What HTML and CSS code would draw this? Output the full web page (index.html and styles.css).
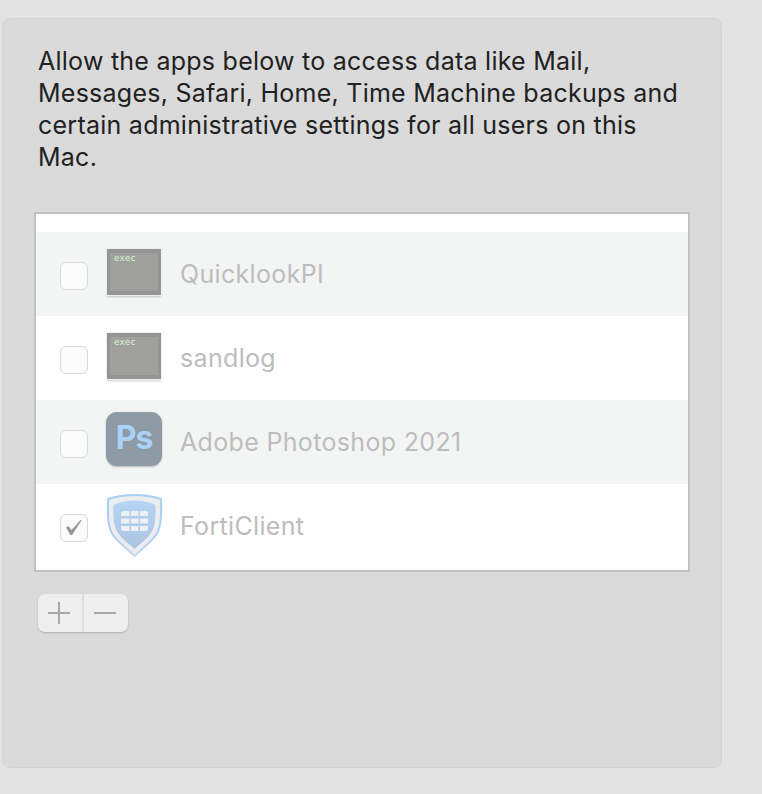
FILE: index.html
```html
<!DOCTYPE html>
<html lang="en">
<head>
    <meta charset="UTF-8">
    <title>Full Disk Access</title>
    <link rel="stylesheet" href="styles.css">
</head>
<body>
    <div class="panel">
        <p class="intro">Allow the apps below to access data like Mail, Messages, Safari, Home, Time Machine backups and certain administrative settings for all users on this Mac.</p>

        <div class="app-list">
            <div class="app-row striped">
                <span class="check"></span>
                <div class="exec-icon"><span>exec</span></div>
                <span class="app-name">QuicklookPI</span>
            </div>
            <div class="app-row">
                <span class="check"></span>
                <div class="exec-icon"><span>exec</span></div>
                <span class="app-name">sandlog</span>
            </div>
            <div class="app-row striped">
                <span class="check"></span>
                <div class="ps-icon">Ps</div>
                <span class="app-name">Adobe Photoshop 2021</span>
            </div>
            <div class="app-row">
                <span class="check">
                    <svg width="26" height="26" viewBox="0 0 26 26">
                        <path d="M5 12.500 L7.500 11 L10.500 15 L19.500 5 L20.500 5.500 L11 20 L9.500 20 Z" fill="#969696"/>
                    </svg>
                </span>
                <svg class="shield-icon" width="58" height="64" viewBox="0 0 58 64">
                    <defs>
                        <linearGradient id="shieldFill" x1="0" y1="0" x2="0" y2="1">
                            <stop offset="0" stop-color="#b4d5f5"/>
                            <stop offset="1" stop-color="#adc3df"/>
                        </linearGradient>
                        <linearGradient id="shieldEdge" x1="0" y1="0" x2="0" y2="1">
                            <stop offset="0" stop-color="#a9cff5"/>
                            <stop offset="0.7" stop-color="#a9cdf0"/>
                            <stop offset="1" stop-color="#cdd9e6"/>
                        </linearGradient>
                    </defs>
                    <path d="M28.500 1 C38 1 47 2.500 55 5 C55.500 22 55 34 50 41 C45 48 37 54 28.500 62 C20 54 12 48 7 41 C2 34 1.500 22 2 5 C10 2.500 19 1 28.500 1 Z" fill="#ebedef" stroke="url(#shieldEdge)" stroke-width="2"/>
                    <path d="M28.500 6.500 C36 6.500 43 8 49.500 11 C50 25 49 33 45 39 C41 45 35 49 28.500 55 C22 49 16 45 12 39 C8 33 7 25 7.500 11 C14 8 21 6.500 28.500 6.500 Z" fill="url(#shieldFill)"/>
                    <g fill="#edf1f5">
                        <path d="M15 20 Q15 17 18 17 H23.500 V22 H15 Z"/>
                        <rect x="25" y="17" width="7.500" height="5"/>
                        <path d="M34 17 H39 Q42 17 42 20 V22 H34 Z"/>
                        <rect x="15" y="24.500" width="8.500" height="5"/>
                        <rect x="25" y="24.500" width="7.500" height="5"/>
                        <rect x="34" y="24.500" width="8" height="5"/>
                        <path d="M15 32 H23.500 V37 H18 Q15 37 15 34 Z"/>
                        <rect x="25" y="32" width="7.500" height="5"/>
                        <path d="M34 32 H42 V34 Q42 37 39 37 H34 Z"/>
                    </g>
                </svg>
                <span class="app-name">FortiClient</span>
            </div>
        </div>

        <div class="add-remove">
            <div class="btn-part">
                <svg width="24" height="24" viewBox="0 0 24 24"><path d="M12 1 V23 M1 12 H23" stroke="#a8a8a8" stroke-width="2"/></svg>
            </div>
            <div class="btn-part">
                <svg width="24" height="24" viewBox="0 0 24 24"><path d="M1 12 H23" stroke="#a8a8a8" stroke-width="2"/></svg>
            </div>
        </div>
    </div>
</body>
</html>
```

FILE: styles.css
```css
html, body {
    height: 100%;
}

body {
    font-family: Inter, "Liberation Sans", sans-serif;
    background-color: #e3e3e3;
    margin: 0;
    padding: 18px 40px 26px 2px;
    box-sizing: border-box;
}

.panel {
    height: 750px;
    box-sizing: border-box;
    background-color: #dadada;
    border: 1px solid #d3d3d3;
    border-radius: 8px;
    padding: 26px 31px 0 31px;
}

.intro {
    margin: 0 0 39px 4px;
    width: 645px;
    font-size: 25px;
    line-height: 32px;
    letter-spacing: 0.25px;
    color: #212121;
}

/* List of apps */
.app-list {
    background-color: #fff;
    border: 2px solid #c2c2c2;
    padding-top: 18px;
    height: 360px;
    box-sizing: border-box;
}

.app-row {
    display: flex;
    align-items: center;
    height: 84px;
    padding-left: 24px;
}

.app-row.striped {
    background-color: #f3f5f4;
}

.check {
    width: 28px;
    height: 28px;
    box-sizing: border-box;
    flex-shrink: 0;
    display: flex;
    align-items: center;
    justify-content: center;
    background-color: #fafbfa;
    border: 1px solid #d9d9d9;
    border-radius: 6px;
    margin: 4px 18px 0 0;
}

.exec-icon {
    width: 54px;
    height: 46px;
    box-sizing: border-box;
    background-color: #a0a19f;
    border: solid #949593;
    border-width: 4px 3px;
    box-shadow: 0 0 0 1px #eef2f5, 0 2px 2px rgba(0, 0, 0, 0.2);
    margin: 0 19px 4px 1px;
    padding-left: 4px;
    font-family: "DejaVu Sans Mono", monospace;
    font-size: 9px;
    line-height: 11px;
    color: #d0f7ca;
}

.ps-icon {
    width: 56px;
    height: 54px;
    background-color: #8e9aa5;
    border-radius: 11px;
    box-shadow: 0 1px 2px rgba(0, 0, 0, 0.25);
    margin: 0 18px 7px 0;
    text-align: center;
    font-size: 32px;
    font-weight: 700;
    letter-spacing: -1px;
    line-height: 52px;
    color: #a9d2f7;
}

.shield-icon {
    flex-shrink: 0;
    margin-right: 16px;
}

.app-name {
    font-size: 25px;
    letter-spacing: 0.33px;
    color: #bdbdbd;
}

/* Plus and minus buttons */
.add-remove {
    display: flex;
    width: 90px;
    height: 38px;
    margin: 22px 0 0 4px;
    background-color: #eeeeee;
    border-radius: 7px;
    box-shadow: 0 1px 2px rgba(0, 0, 0, 0.2);
}

.btn-part {
    width: 44px;
    display: flex;
    align-items: center;
    justify-content: center;
    padding-right: 2px;
    box-sizing: border-box;
}

.btn-part + .btn-part {
    width: 46px;
    border-left: 2px solid #dfdfdf;
}
```
